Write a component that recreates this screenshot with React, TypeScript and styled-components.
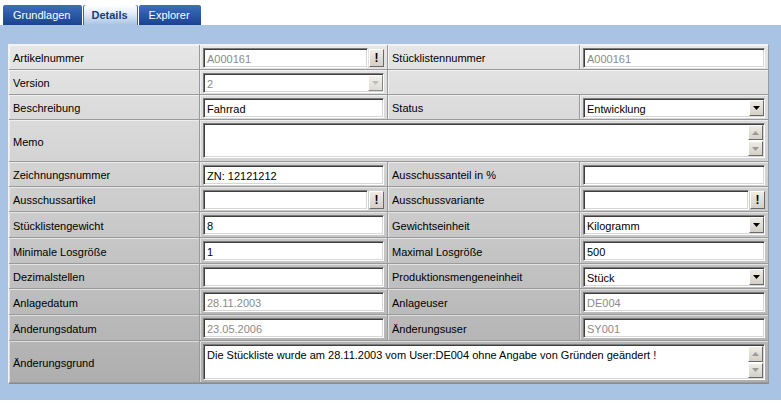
import React from "react";
import styled, { createGlobalStyle } from "styled-components";

const GlobalStyle = createGlobalStyle`
  html, body {
    margin: 0;
    padding: 0;
    background: #ffffff;
  }
  body {
    font-family: "Liberation Sans", Arial, sans-serif;
    font-size: 11px;
  }
`;

const Page = styled.div`
  width: 781px;
  height: 403px;
  display: flex;
  flex-direction: column;
`;

const TabBar = styled.div`
  display: flex;
  gap: 1px;
  height: 25px;
  padding: 5px 0 0 3px;
  box-sizing: border-box;
  background: #ffffff;
`;

const Tab = styled.div<{ $active?: boolean }>`
  height: 20px;
  padding-left: ${(p) => (p.$active ? "9px" : "10px")};
  padding-right: ${(p) => (p.$active ? "10px" : "11px")};
  display: flex;
  align-items: center;
  font-size: 11px;
  border-radius: 2px 2px 0 0;
  color: ${(p) => (p.$active ? "#1d3a78" : "#ffffff")};
  font-weight: ${(p) => (p.$active ? "bold" : "normal")};
  background: ${(p) =>
    p.$active
      ? "linear-gradient(#ffffff 0%, #e4edf8 40%, #a9c3e4 100%)"
      : "linear-gradient(#3f6fbc 0%, #2c5aa8 45%, #1c428f 100%)"};
  box-shadow: ${(p) =>
    p.$active ? "inset 1px 0 0 #3a64ad, inset -1px 0 0 #3a64ad" : "none"};
`;

const Panel = styled.div`
  height: 375px;
  background: #a9c3e4;
  padding: 19px 13px 0 8px;
  box-sizing: border-box;
`;

const Table = styled.div`
  display: grid;
  grid-template-columns: 191px 188px 192px 189px;
  grid-template-rows: 25px 25px 25px 42px 25px 25px 26px 26px 25px 26px 26px 42px;
  background: linear-gradient(#e6e6e6, #c8c8c8 55%, #aeaeae);
  border-top: 1px solid #f2f2f2;
  border-left: 1px solid #f2f2f2;
  box-shadow: 1px 1px 0 #8c8c8c;
  box-sizing: border-box;
  width: 760px;
`;

const Cell = styled.div<{ $span?: number }>`
  grid-column: span ${(p) => p.$span || 1};
  box-sizing: border-box;
  border-right: 1px solid #9a9a9a;
  border-bottom: 1px solid #9a9a9a;
  box-shadow: inset 1px 1px 0 rgba(255, 255, 255, 0.55);
  display: flex;
  align-items: center;
  min-width: 0;
`;

const Label = styled(Cell)`
  padding: 2px 0 0 4px;
  color: #000000;
  font-size: 11px;
  white-space: nowrap;
`;

const Value = styled(Cell)`
  padding: 3px 3px 0 3px;
  align-items: flex-start;
  gap: 1px;
`;

const sunken = `
  background: #ffffff;
  box-sizing: border-box;
  border: 1px solid;
  border-color: #7c7c7c #ffffff #ffffff #7c7c7c;
  box-shadow: inset 1px 1px 0 #3e3e3e, inset -1px -1px 0 #d6d6d6;
`;

const Input = styled.div<{ $disabled?: boolean }>`
  ${sunken}
  flex: 1;
  height: 20px;
  padding: 1px 3px 0 3px;
  display: flex;
  align-items: center;
  font-size: 11px;
  color: ${(p) => (p.$disabled ? "#8a8a8a" : "#000000")};
  white-space: nowrap;
  overflow: hidden;
`;

const Area = styled.div<{ $height: number }>`
  ${sunken}
  flex: 1;
  height: ${(p) => p.$height}px;
  display: flex;
  font-size: 11px;
  color: #000000;
`;

const AreaText = styled.div`
  flex: 1;
  padding: 4px 3px 0 3px;
  white-space: nowrap;
  overflow: hidden;
`;

const ScrollCol = styled.div`
  display: flex;
  flex-direction: column;
  padding: 1px 1px 1px 0;
  gap: 1px;
`;

const raised = `
  box-sizing: border-box;
  background: linear-gradient(#eeece6, #d4d0c8);
  border: 1px solid;
  border-color: #ffffff #6a6a6a #6a6a6a #ffffff;
  display: flex;
  align-items: center;
  justify-content: center;
`;

const ScrollButton = styled.div`
  ${raised}
  width: 15px;
  height: 16px;
`;

const Bang = styled.div`
  ${raised}
  width: 15px;
  height: 18px;
  margin-top: 1px;
  font-weight: bold;
  font-size: 12px;
  color: #000000;
`;

const DropButton = styled.div<{ $disabled?: boolean }>`
  ${raised}
  width: 15px;
  height: 16px;
  margin-left: auto;
  opacity: ${(p) => (p.$disabled ? 0.75 : 1)};
`;

const Select = styled(Input)`
  padding: 0 0 0 3px;
  justify-content: space-between;
  & > span {
    padding-top: 1px;
  }
`;

const Arrow = ({ dir, color }: { dir: "up" | "down"; color: string }) => (
  <svg width="7" height="4" viewBox="0 0 7 4">
    {dir === "down" ? (
      <polygon points="0,0 7,0 3.5,4" fill={color} />
    ) : (
      <polygon points="0,4 7,4 3.5,0" fill={color} />
    )}
  </svg>
);

const TextField = ({ value = "", disabled }: { value?: string; disabled?: boolean }) => (
  <Input $disabled={disabled}>{value}</Input>
);

const LookupField = ({ value = "" }: { value?: string }) => (
  <>
    <Input $disabled={value !== ""}>{value}</Input>
    <Bang>!</Bang>
  </>
);

const DropField = ({ value, disabled }: { value: string; disabled?: boolean }) => (
  <Select $disabled={disabled}>
    <span>{value}</span>
    <DropButton $disabled={disabled}>
      <Arrow dir="down" color={disabled ? "#a8a8a8" : "#000000"} />
    </DropButton>
  </Select>
);

const MemoField = ({ value = "", height }: { value?: string; height: number }) => (
  <Area $height={height}>
    <AreaText>{value}</AreaText>
    <ScrollCol>
      <ScrollButton>
        <Arrow dir="up" color="#9a9a9a" />
      </ScrollButton>
      <ScrollButton>
        <Arrow dir="down" color="#9a9a9a" />
      </ScrollButton>
    </ScrollCol>
  </Area>
);

export default function App() {
  return (
    <Page>
      <GlobalStyle />
      <TabBar>
        <Tab>Grundlagen</Tab>
        <Tab $active>Details</Tab>
        <Tab>Explorer</Tab>
      </TabBar>
      <Panel>
        <Table>
          <Label>Artikelnummer</Label>
          <Value>
            <LookupField value="A000161" />
          </Value>
          <Label>Stücklistennummer</Label>
          <Value>
            <TextField value="A000161" disabled />
          </Value>

          <Label>Version</Label>
          <Value>
            <DropField value="2" disabled />
          </Value>
          <Cell $span={2} />

          <Label>Beschreibung</Label>
          <Value>
            <TextField value="Fahrrad" />
          </Value>
          <Label>Status</Label>
          <Value>
            <DropField value="Entwicklung" />
          </Value>

          <Label>Memo</Label>
          <Value $span={3}>
            <MemoField height={35} />
          </Value>

          <Label>Zeichnungsnummer</Label>
          <Value>
            <TextField value="ZN: 12121212" />
          </Value>
          <Label>Ausschussanteil in %</Label>
          <Value>
            <TextField />
          </Value>

          <Label>Ausschussartikel</Label>
          <Value>
            <LookupField />
          </Value>
          <Label>Ausschussvariante</Label>
          <Value>
            <LookupField />
          </Value>

          <Label>Stücklistengewicht</Label>
          <Value>
            <TextField value="8" />
          </Value>
          <Label>Gewichtseinheit</Label>
          <Value>
            <DropField value="Kilogramm" />
          </Value>

          <Label>Minimale Losgröße</Label>
          <Value>
            <TextField value="1" />
          </Value>
          <Label>Maximal Losgröße</Label>
          <Value>
            <TextField value="500" />
          </Value>

          <Label>Dezimalstellen</Label>
          <Value>
            <TextField />
          </Value>
          <Label>Produktionsmengeneinheit</Label>
          <Value>
            <DropField value="Stück" />
          </Value>

          <Label>Anlagedatum</Label>
          <Value>
            <TextField value="28.11.2003" disabled />
          </Value>
          <Label>Anlageuser</Label>
          <Value>
            <TextField value="DE004" disabled />
          </Value>

          <Label>Änderungsdatum</Label>
          <Value>
            <TextField value="23.05.2006" disabled />
          </Value>
          <Label>Änderungsuser</Label>
          <Value>
            <TextField value="SY001" disabled />
          </Value>

          <Label>Änderungsgrund</Label>
          <Value $span={3}>
            <MemoField
              height={36}
              value="Die Stückliste wurde am 28.11.2003 vom User:DE004 ohne Angabe von Gründen geändert !"
            />
          </Value>
        </Table>
      </Panel>
    </Page>
  );
}
